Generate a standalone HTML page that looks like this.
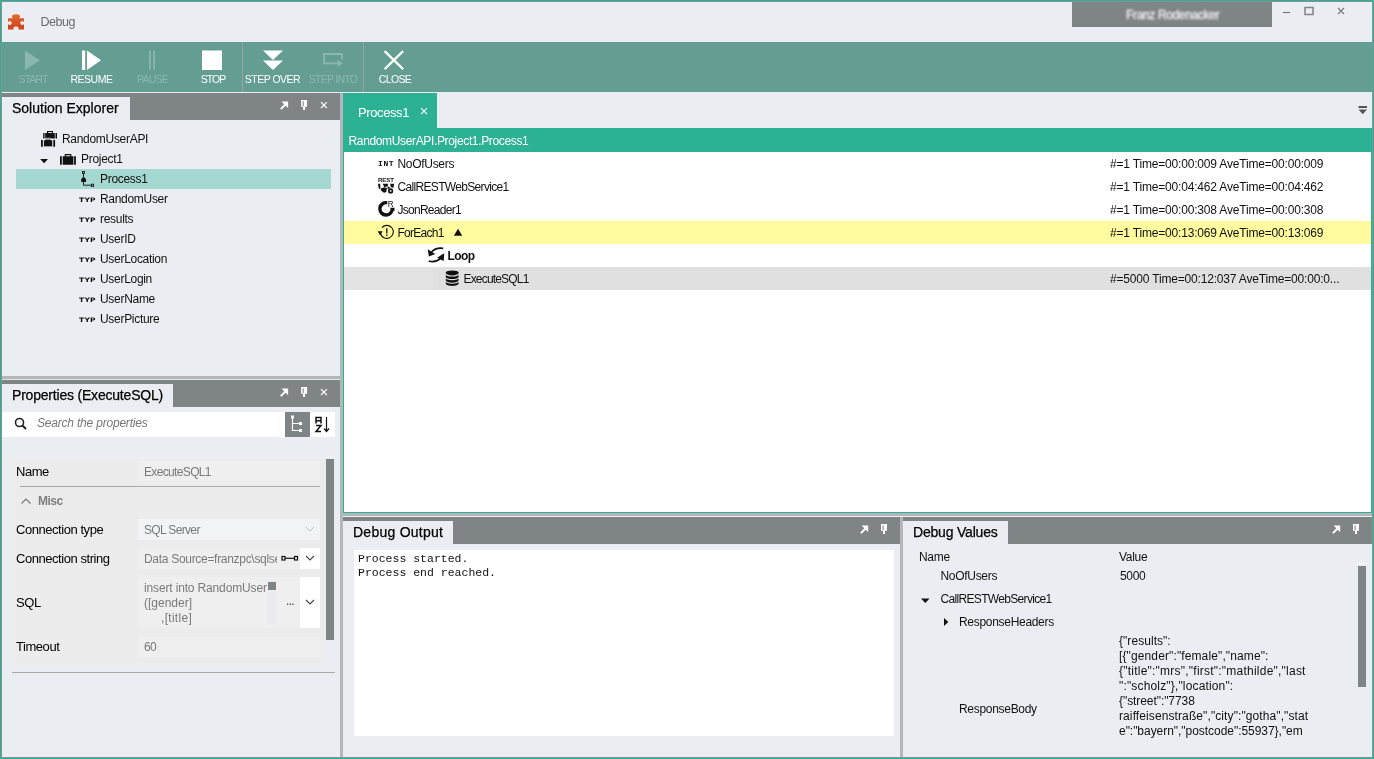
<!DOCTYPE html>
<html lang="en">
<head>
<meta charset="utf-8">
<title>Debug</title>
<style>
*{box-sizing:border-box;margin:0;padding:0}
html,body{width:1374px;height:759px;overflow:hidden;background:#eaeef3;font-family:"Liberation Sans","DejaVu Sans",sans-serif;font-size:12px;color:#111}
#win{position:absolute;left:0;top:0;width:1374px;height:759px;background:transparent;overflow:hidden;will-change:transform}
#frame{position:absolute;left:0;top:0;width:1374px;height:759px;border:1px solid #2db195;z-index:50;pointer-events:none}
#frame:before{content:"";position:absolute;left:0;top:0;right:0;bottom:0;border:1px solid #8a9092}
.abs{position:absolute}
.t{position:absolute;white-space:nowrap;line-height:16px;height:16px;letter-spacing:-0.3px}
/* title bar */
#title{left:2px;top:2px;width:1370px;height:40px;background:#eaeef3}
#title .cap{left:38.500px;top:12px;font-size:12.5px;color:#666c71;letter-spacing:-0.5px}
#user{left:1070px;top:0;width:200px;height:25px;background:#7f8486}
#user span{position:absolute;left:54px;top:6px;font-size:12px;line-height:14px;letter-spacing:-0.35px;color:#f2f4f5;-webkit-text-stroke:0.3px #f2f4f5;filter:blur(1.3px);white-space:nowrap}
/* toolbar */
#tb{left:2px;top:42px;width:1370px;height:50px;background:#649e93}
.tbl{position:absolute;top:30px;height:14px;line-height:14px;font-size:10.5px;letter-spacing:-0.5px;color:#fff;text-align:center;white-space:nowrap;transform:translateX(-50%)}
.dis{color:#8cb7ae}
.sep{position:absolute;top:0;width:1px;height:50px;background:#9aa5a3}
#tb svg{position:absolute;top:8px;left:0}
/* panel headers */
.hdr{position:absolute;background:#7f8486;height:27px}
.tab{-webkit-text-stroke:0.25px #000;position:absolute;background:#eaeef3;left:0;bottom:0;top:4px;font-size:14px;line-height:22px;color:#000;padding-left:10px;white-space:nowrap}
.hdr svg{position:absolute;top:0;right:0}
.spl{position:absolute;background:#b4b7ba}

/* solution explorer */
.row{position:absolute;left:0;height:20px;width:338px}
.row .t{top:2px}
.sel{position:absolute;left:14px;top:77px;width:315px;height:20px;background:#a5d8d0}
.typ{position:absolute;font-family:"DejaVu Sans","Liberation Sans",sans-serif;font-weight:bold;font-size:6.2px;line-height:8px;letter-spacing:0.2px;color:#111;white-space:nowrap;transform:scaleX(1.22);transform-origin:0 0}

/* properties */
#props{position:absolute;left:0;top:288px;width:338px;height:377px}
.pl{color:#000;font-size:13px;letter-spacing:-0.45px}
.pv{color:#7a7a7a;letter-spacing:-0.65px}
.fld{position:absolute;left:136px;width:182px;background:#efefef}

/* center */
#center{background:#fff;border:1px solid #2db195;border-top:0}
#ctabs{position:absolute;left:-1px;top:0;width:1029px;height:35px;background:#eaeef3}
#ctab{position:absolute;left:0;top:0;width:94px;height:35px;background:#2db195;color:#fff;font-size:14px}
#cbar{position:absolute;left:-1px;top:35px;width:1029px;height:24px;background:#2db195}
.cr{position:absolute;left:0;width:1027px;height:23px}
.tm{letter-spacing:-0.18px}
.ic{position:absolute;font-family:"Liberation Mono","DejaVu Sans Mono",monospace;font-weight:bold;color:#111;white-space:nowrap}

/* bottom */
#dout .mono{position:absolute;white-space:pre;font-family:"Liberation Mono","DejaVu Sans Mono",monospace;font-size:11.5px;line-height:14px;color:#111}
.js{letter-spacing:-0.2px}
</style>
</head>
<body>
<div id="win">
  <div id="title" class="abs">
    <svg class="abs" style="left:5px;top:11px" width="18" height="18" viewBox="0 0 18 18"><defs><linearGradient id="pz" x1="0" y1="0" x2="0" y2="1"><stop offset="0" stop-color="#e2672f"/><stop offset="1" stop-color="#d0401c"/></linearGradient></defs><path fill="url(#pz)" d="M1 5.2h5.2c-.9-.5-1.3-1.2-1.3-1.9C4.900 2 6.700 1.300 9 1.300s4.100.7 4.100 2c0 .7-.4 1.400-1.300 1.900H17v4c-.5-.7-1.200-1.100-1.900-1.100-1 0-1.700.9-1.700 2s.7 2 1.700 2c.7 0 1.400-.4 1.900-1.100v5.400h-5.700c.2-.4.300-.8.300-1.200 0-1-.9-1.800-2.600-1.800s-2.600.8-2.600 1.800c0 .4.100.8.300 1.200H1v-5.400c.5.700 1.200 1.100 1.900 1.100 1 0 1.700-.9 1.700-2s-.7-2-1.700-2c-.7 0-1.400.4-1.900 1.100z"/></svg>
    <div class="t cap">Debug</div>
    <div id="user" class="abs"><span>Franz Rodenacker</span></div>
    <svg class="abs" style="left:1270px;top:0" width="100" height="26" viewBox="0 0 100 26"><g fill="none" stroke="#6f767a" stroke-width="1.1"><path d="M11 10.500h7"/><rect x="33" y="5.500" width="8" height="7" stroke="#7d8386" stroke-width="1.500"/><path d="M66 6l6 6M72 6l-6 6"/></g></svg>
  </div>
  <div id="tb" class="abs">
    <svg width="420" height="22" viewBox="0 0 420 22">
      <path fill="#8cb7ae" d="M23 .5v19.500l15-9.750z"/>
      <path fill="#fff" d="M80 .5h3.200v19.500H80zM85 .5v19.500l14-9.750z"/>
      <path fill="#8cb7ae" d="M147 .5h1.700v19.500H147zM151.300 .5h1.700v19.500h-1.700z"/>
      <path fill="#fff" d="M200 .5h20v19.500h-20z"/>
      <path fill="#fff" d="M261 .5h20l-10 9.500zM261 10.500h20l-10 9.500z"/>
      <path fill="none" stroke="#8cb7ae" stroke-width="1.800" d="M336 13.400h-13.900V4h17.800v5.500"/><path fill="#8cb7ae" d="M335.600 9.700l5.200 3.600-5.200 3.600z"/>
      <path fill="none" stroke="#fff" stroke-width="2.200" d="M382.600 1.100l18.500 18M401.100 1.100l-18.500 18"/>
    </svg>
    <div class="tbl dis" style="left:31px;letter-spacing:-0.9px">START</div>
    <div class="tbl" style="left:89.500px">RESUME</div>
    <div class="tbl dis" style="left:150.500px;letter-spacing:-0.75px">PAUSE</div>
    <div class="tbl" style="left:211px;letter-spacing:-1px">STOP</div>
    <div class="sep" style="left:240px"></div>
    <div class="tbl" style="left:270.500px">STEP OVER</div>
    <div class="tbl dis" style="left:331px;letter-spacing:-0.75px">STEP INTO</div>
    <div class="sep" style="left:361px"></div>
    <div class="tbl" style="left:393px;letter-spacing:-0.65px">CLOSE</div>
  </div>
  <!-- LEFT COLUMN -->
  <div id="left" class="abs" style="left:2px;top:92px;width:338px;height:665px">
    <div class="hdr" style="left:0;top:1px;width:338px"><div class="tab" style="width:128px">Solution Explorer</div>
      <svg width="70" height="27" viewBox="0 0 70 27"><g transform="translate(10.100 0)"><path stroke="#fff" stroke-width="2" fill="none" d="M.7 16.100l5.300-5.300"/><path fill="#fff" d="M1.400 8.400h6.600v6.800z"/></g><g transform="translate(31.100 0)"><path fill="#fff" d="M0 7.100h6v6.700h-2v3.200h-2v-3.200h-2z"/><path fill="#8f9497" d="M1.500 8.300h1.200v4.600h-1.200z"/></g><g transform="translate(51 0)"><path fill="none" stroke="#fff" stroke-width="1.200" d="M0 9.200l5.800 5.800M5.800 9.200l-5.800 5.800"/></g></svg>
    </div>
    <div class="sel"></div>
    <div id="tree" class="abs" style="left:0;top:0">
      <div class="t" style="left:60px;top:39px">RandomUserAPI</div>
      <div class="t" style="left:79px;top:59px">Project1</div>
      <div class="t" style="left:98px;top:79px">Process1</div>
      <div class="t" style="left:98px;top:99px">RandomUser</div>
      <div class="t" style="left:98px;top:119px">results</div>
      <div class="t" style="left:98px;top:139px">UserID</div>
      <div class="t" style="left:98px;top:159px">UserLocation</div>
      <div class="t" style="left:98px;top:179px">UserLogin</div>
      <div class="t" style="left:98px;top:199px">UserName</div>
      <div class="t" style="left:98px;top:219px">UserPicture</div>
      <div class="typ" style="left:77px;top:104px">TYP</div>
      <div class="typ" style="left:77px;top:124px">TYP</div>
      <div class="typ" style="left:77px;top:144px">TYP</div>
      <div class="typ" style="left:77px;top:164px">TYP</div>
      <div class="typ" style="left:77px;top:184px">TYP</div>
      <div class="typ" style="left:77px;top:204px">TYP</div>
      <div class="typ" style="left:77px;top:224px">TYP</div>
      <svg class="abs" style="left:34px;top:34px" width="70" height="70" viewBox="0 0 70 70">
        <g fill="#111">
        <path d="M7.200 7h1.400v5.600h-1.400zM19.500 7h1.500v5.600h-1.500zM9.200 7h1.800v-2h6v2h1.800v5.600h-9.600zM12.200 7h3.600v-.9h-3.600z"/>
        <path stroke="#eaeef3" stroke-width=".8" d="M7.500 14h1.800v-1.700h5.400v1.700h2v6.800h-9.200z"/><path fill="#eaeef3" d="M10.400 14h3.200v-.7h-3.200z"/>
        <path d="M5 14h1.800v6.800H5zM17.300 14h1.800v6.800h-1.800z"/>
        <path d="M4.200 33h7.800l-3.900 4.200z"/>
        <path d="M24 30.300h1.800v8.400H24zM38.100 30.300h1.800v8.400h-1.800zM26.700 30.300h2v-2.200h6.700v2.200h2v8.400h-10.700zM29.800 30.300h4.500v-1.100h-4.500z"/>
        </g>
        <g fill="none" stroke="#111" stroke-width=".9"><rect x="46.500" y="45.500" width="2" height="2"/><path d="M47.500 47.500v4M47.500 56v3.200h7.700"/><rect x="55.400" y="58.200" width="2.200" height="2.200"/><path fill="#111" stroke="none" d="M45.200 56v-2.700l1.300-1.700h2.100l1.400 1.700v2.700z"/></g>
      </svg>
    </div>

    <div class="spl" style="left:0;top:284px;width:338px;height:3px"></div><div class="abs" style="left:0;top:287px;width:338px;height:1px;background:#e3e6ea"></div>
    <div id="props">
      <div class="hdr" style="left:0;top:0;width:338px"><div class="tab" style="width:171px;letter-spacing:-0.2px">Properties (ExecuteSQL)</div>
        <svg width="70" height="27" viewBox="0 0 70 27"><g transform="translate(10.100 0)"><path stroke="#fff" stroke-width="2" fill="none" d="M.7 16.100l5.300-5.300"/><path fill="#fff" d="M1.400 8.400h6.600v6.800z"/></g><g transform="translate(31.100 0)"><path fill="#fff" d="M0 7.100h6v6.700h-2v3.200h-2v-3.200h-2z"/><path fill="#8f9497" d="M1.500 8.300h1.200v4.600h-1.200z"/></g><g transform="translate(51 0)"><path fill="none" stroke="#fff" stroke-width="1.200" d="M0 9.200l5.800 5.800M5.800 9.200l-5.800 5.800"/></g></svg>
      </div>
      <div class="abs" style="left:0;top:32px;width:333px;height:25px;background:#fff"></div>
      <div class="abs" style="left:283px;top:32px;width:25px;height:25px;background:#7f8486"></div>
      <svg class="abs" style="left:10px;top:32px" width="325" height="25" viewBox="0 0 325 25"><g fill="none" stroke="#222"><circle cx="7.500" cy="10.500" r="4" stroke-width="1.600"/><path stroke-width="2" d="M10.500 13.500l3.500 3.500"/></g>
        <g fill="none" stroke="#fff" stroke-width="1.200"><path d="M280.500 5v13.500h7M280.500 11.500h7"/></g><g fill="#fff"><rect x="279" y="3.500" width="3" height="3"/><rect x="287" y="10" width="3" height="3"/><rect x="287" y="17" width="3" height="3"/></g>
        <g fill="none" stroke="#111" stroke-width="1.500"><path d="M304 11.500v-6h5v6M304 8.700h5M304 13.500h5l-5 6h5"/><path stroke-width="1.200" d="M314.500 5v14M312 16.500l2.500 3 2.500-3"/></g>
      </svg>
      <div class="t" style="left:35px;top:35px;font-style:italic;color:#777;letter-spacing:-0.2px">Search the properties</div>
      <div class="abs" style="left:10px;top:79px;width:314px;height:207px;background:#ececec"></div>
      <div class="abs" style="left:10px;top:79px;width:314px;height:24px;background:#ececec"></div>
      <div class="fld" style="top:81px;height:20px"></div>
      <div class="abs" style="left:18px;top:106px;width:300px;height:1px;background:#a9a9a9"></div>
      <div class="abs" style="left:324px;top:79px;width:8px;height:181px;background:#7f8486"></div>
      <div class="t pl" style="left:14px;top:84px">Name</div>
      <div class="t pv" style="left:142px;top:84px">ExecuteSQL1</div>
      <svg class="abs" style="left:18px;top:117px" width="12" height="8" viewBox="0 0 12 8"><path fill="none" stroke="#777" stroke-width="1.100" d="M1.500 6.500l4.500-4.500 4.500 4.500"/></svg>
      <div class="t" style="left:36px;top:113px;font-weight:bold;color:#808080;letter-spacing:-0.5px">Misc</div>
      <div class="fld" style="top:139px;height:21px;background:#f1f3f6"></div>
      <div class="t pl" style="left:14px;top:142px">Connection type</div>
      <div class="t pv" style="left:142px;top:142px">SQL Server</div>
      <svg class="abs" style="left:303px;top:146px" width="10" height="6" viewBox="0 0 10 6"><path fill="none" stroke="#bbb" stroke-width="1" d="M1 1l4 4 4-4"/></svg>
      <div class="fld" style="top:168px;height:21px"></div>
      <div class="t pl" style="left:14px;top:171px">Connection string</div>
      <div class="t pv" style="left:142px;top:171px;width:133px;overflow:hidden;letter-spacing:-0.3px">Data Source=franzpc\sqlserver</div>
      <svg class="abs" style="left:279px;top:175px" width="18" height="7" viewBox="0 0 18 7"><g fill="none" stroke="#111" stroke-width="1.200"><rect x="1" y="1.500" width="3" height="3.500"/><path d="M4 3.300h9.500"/><rect x="13.500" y="1.500" width="3" height="3.500"/></g></svg>
      <div class="abs" style="left:298px;top:168px;width:20px;height:21px;background:#fff"></div>
      <svg class="abs" style="left:303px;top:175px" width="10" height="6" viewBox="0 0 10 6"><path fill="none" stroke="#444" stroke-width="1.100" d="M1 1l4 4 4-4"/></svg>
      <div class="fld" style="top:197px;height:51px"></div>
      <div class="t pl" style="left:14px;top:215px">SQL</div>
      <div class="t pv" style="left:142px;top:200px;width:124px;overflow:hidden;letter-spacing:-0.15px">insert into RandomUsers</div>
      <div class="t pv" style="left:142px;top:215px;letter-spacing:0">([gender]</div>
      <div class="t pv" style="left:159px;top:230px;letter-spacing:0.3px">,[title]</div>
      <div class="abs" style="left:265px;top:200px;width:9px;height:45px;background:#eaecef"></div>
      <div class="abs" style="left:266px;top:202px;width:8px;height:8px;background:#7f8486"></div>
      <div class="t pv" style="left:284px;top:213px;color:#444">...</div>
      <div class="abs" style="left:298px;top:197px;width:20px;height:51px;background:#fff"></div>
      <svg class="abs" style="left:303px;top:219px" width="10" height="6" viewBox="0 0 10 6"><path fill="none" stroke="#444" stroke-width="1.100" d="M1 1l4 4 4-4"/></svg>
      <div class="fld" style="top:257px;height:20px"></div>
      <div class="t pl" style="left:14px;top:259px">Timeout</div>
      <div class="t pv" style="left:142px;top:259px">60</div>
      <div class="abs" style="left:10px;top:292px;width:323px;height:1px;background:#a9a9a9"></div>
    </div>
  </div>
  <div class="spl" style="left:340px;top:93px;width:3px;height:664px"></div>
  <!-- CENTER -->
  <div id="center" class="abs" style="left:343px;top:93px;width:1029px;height:420px">

    <div id="ctabs"><div id="ctab"><div class="t" style="left:15px;top:12px;font-size:13px;letter-spacing:-0.4px;color:#fff">Process1</div>
      <svg class="abs" style="left:76px;top:14px" width="9" height="9" viewBox="0 0 9 9"><path fill="none" stroke="#fff" stroke-width="1.200" d="M2 1.100l6 6M8 1.100l-6 6"/></svg></div>
      <svg class="abs" style="left:1014px;top:12px" width="12" height="10" viewBox="0 0 12 10"><path fill="#555" d="M1.500 1h8.500v2h-8.500zM1.500 4.500h8.500l-4.250 4.800z"/></svg>
    </div>
    <div id="cbar"><div class="t" style="left:5.500px;top:5px;color:#fff;letter-spacing:-0.35px">RandomUserAPI.Project1.Process1</div></div>
    <div class="cr" style="top:128px;background:#fffb9e"></div>
    <div class="cr" style="top:174px;background:#e0e0e0"></div>
    <div class="cr" style="top:174px;width:89px;background:#e3e3e3"></div>
    <div class="t" style="left:53.500px;top:63px">NoOfUsers</div>
    <div class="t" style="left:53.500px;top:86px;letter-spacing:-0.67px">CallRESTWebService1</div>
    <div class="t" style="left:53.500px;top:109px;letter-spacing:-0.73px">JsonReader1</div>
    <div class="t" style="left:53.500px;top:132px;letter-spacing:-0.74px">ForEach1</div>
    <div class="t" style="left:103.500px;top:155px;font-weight:bold;letter-spacing:-0.6px">Loop</div>
    <div class="t" style="left:119.500px;top:178px;letter-spacing:-0.82px">ExecuteSQL1</div>
    <div class="t tm" style="left:766px;top:63px">#=1 Time=00:00:009 AveTime=00:00:009</div>
    <div class="t tm" style="left:766px;top:86px">#=1 Time=00:04:462 AveTime=00:04:462</div>
    <div class="t tm" style="left:766px;top:109px">#=1 Time=00:00:308 AveTime=00:00:308</div>
    <div class="t tm" style="left:766px;top:132px">#=1 Time=00:13:069 AveTime=00:13:069</div>
    <div class="t tm" style="left:766px;top:178px">#=5000 Time=00:12:037 AveTime=00:00:0...</div>
    <svg class="abs" style="left:28px;top:59px" width="100" height="140" viewBox="0 0 100 140">
      <text x="6" y="30" font-family="Liberation Sans,sans-serif" font-weight="bold" font-size="4.600" textLength="16" lengthAdjust="spacingAndGlyphs" fill="#111">REST</text>
      <g fill="#111"><path d="M6.100 31.800h2l.4 4.700-1.300.6c-.8-1.600-1.100-3.400-1.100-5.300z"/><path d="M10.800 31.800h5.400l-.6 2.600-3.400.5z"/><path d="M18.200 31.800h3.800c0 1.500-.2 2.900-.7 4.200l-2.600-1z"/><path d="M9 36.500l3.200-1.300 2.800.8-.8 4-2 .8c-1.400-.5-2.600-1.600-3.500-3z"/><path d="M15.600 34.500l2.400.8-.5 1.500-1.800.2z"/></g>
      <circle cx="18.600" cy="38.900" r="2.600" fill="#111"/><circle cx="18.600" cy="38.900" r=".9" fill="#fff"/>
      <path fill="none" stroke="#111" stroke-width="3.400" d="M15.500 50.800a6.200 6.200 0 1 0 4.700 5.200"/>
      <path fill="#111" d="M17 55.200h5.500v4z"/>
      <rect x="15.500" y="48.500" width="7.500" height="7.200" fill="#fff"/>
      <text x="15.800" y="55.300" font-family="Liberation Sans,sans-serif" font-size="8.200" fill="#111">R</text>
      <path fill="none" stroke="#111" stroke-width="1.150" d="M10 75.500a6.500 6.500 0 1 1-1.500 6"/>
      <path fill="#111" d="M5.700 79.300h4.900l-2.500 4.200z"/>
      <path fill="none" stroke="#111" stroke-width="1.300" d="M14.800 76.200v5.300M14.800 82.600v1.300"/>
      <path fill="#111" d="M81.900 83.800h8.300l-4.150-7z"/>
      <g fill="none" stroke="#111" stroke-width="1.800"><path d="M71.200 96.400c-5.500-1-11 1-13 5.800"/><path d="M56.800 109c5.500 1.600 12-.5 14-6"/></g>
      <path fill="#111" d="M55.700 97.300l1.200 7.300 6.300-2.600zM72.200 101.200l-.5 7.800-6.600-3.300z"/>
      <g fill="#111"><ellipse cx="80.200" cy="120.800" rx="6.400" ry="2.400"/><path d="M73.800 120.800v10.800c0 1.400 2.900 2.300 6.400 2.300s6.400-.9 6.400-2.300v-10.800z"/></g><g fill="none" stroke="#e0e0e0" stroke-width="1.100"><path d="M73.300 121.600c1 1.700 3.700 2.400 6.900 2.400s5.900-.7 6.900-2.400"/><path d="M73.300 125.200c1 1.700 3.700 2.400 6.900 2.400s5.900-.7 6.900-2.400"/><path d="M73.300 128.800c1 1.700 3.700 2.400 6.900 2.400s5.900-.7 6.900-2.400"/></g>
    </svg>
    <div class="ic" style="left:34px;top:67px;font-size:8px;line-height:8px;letter-spacing:0.6px">INT</div>
  </div>
  <div class="spl" style="left:343px;top:513px;width:1029px;height:3px"></div><div class="abs" style="left:343px;top:516px;width:1029px;height:1px;background:#eceff2"></div>
  <!-- BOTTOM -->
  <div id="dout" class="abs" style="left:343px;top:517px;width:557px;height:240px">

    <div class="hdr" style="left:0;top:0;width:557px"><div class="tab" style="width:110px;letter-spacing:0.25px">Debug Output</div><svg width="45" height="27" viewBox="0 0 45 27" style="right:0"><g transform="translate(5.200 0)"><path stroke="#fff" stroke-width="2" fill="none" d="M.7 16.100l5.300-5.300"/><path fill="#fff" d="M1.400 8.400h6.600v6.800z"/></g><g transform="translate(26 0)"><path fill="#fff" d="M0 7.100h6v6.700h-2v3.200h-2v-3.200h-2z"/><path fill="#8f9497" d="M1.500 8.300h1.200v4.600h-1.200z"/></g></svg></div>
    <div class="abs" style="left:11px;top:33px;width:540px;height:186px;background:#fff"></div>
    <div class="mono" style="left:15px;top:35px">Process started.
Process end reached.</div>
  </div>
  <div class="spl" style="left:900px;top:517px;width:3px;height:240px"></div>
  <div id="dval" class="abs" style="left:903px;top:517px;width:469px;height:240px">

    <div class="hdr" style="left:0;top:0;width:469px"><div class="tab" style="width:105px;letter-spacing:-0.2px">Debug Values</div><svg width="45" height="27" viewBox="0 0 45 27" style="right:0"><g transform="translate(5.200 0)"><path stroke="#fff" stroke-width="2" fill="none" d="M.7 16.100l5.300-5.300"/><path fill="#fff" d="M1.400 8.400h6.600v6.800z"/></g><g transform="translate(26 0)"><path fill="#fff" d="M0 7.100h6v6.700h-2v3.200h-2v-3.200h-2z"/><path fill="#8f9497" d="M1.500 8.300h1.200v4.600h-1.200z"/></g></svg></div>
    <div class="t" style="left:16px;top:32px">Name</div>
    <div class="t" style="left:216px;top:32px">Value</div>
    <div class="t" style="left:37.500px;top:51px">NoOfUsers</div>
    <div class="t" style="left:217px;top:51px">5000</div>
    <div class="t" style="left:37.500px;top:74px;letter-spacing:-0.67px">CallRESTWebService1</div>
    <div class="t" style="left:56px;top:97px">ResponseHeaders</div>
    <div class="t" style="left:56px;top:184px">ResponseBody</div>
    <div class="t js" style="left:216px;top:116px;letter-spacing:0.05px">{"results":</div>
    <div class="t js" style="left:216px;top:131px;letter-spacing:0.12px">[{"gender":"female","name":</div>
    <div class="t js" style="left:216px;top:146px;letter-spacing:0.23px">{"title":"mrs","first":"mathilde","last</div>
    <div class="t js" style="left:216px;top:161px;letter-spacing:0.16px">":"scholz"},"location":</div>
    <div class="t js" style="left:216px;top:176px;letter-spacing:-0.07px">{"street":"7738</div>
    <div class="t js" style="left:216px;top:191px;letter-spacing:0.1px">raiffeisenstraße","city":"gotha","stat</div>
    <div class="t js" style="left:216px;top:206px;letter-spacing:-0.04px">e":"bayern","postcode":55937},"em</div>
    <svg class="abs" style="left:14px;top:76px" width="40" height="36" viewBox="0 0 40 36"><path fill="#111" d="M4 5.500h8.500l-4.250 4.500zM27 25v8l4.300-4z"/></svg>
    <div class="abs" style="left:453px;top:46px;width:11px;height:1px;background:#fff"></div>
    <div class="abs" style="left:455px;top:49px;width:8px;height:121px;background:#7f8486"></div>
  </div>
  <div id="frame"></div>
</div>
</body>
</html>
